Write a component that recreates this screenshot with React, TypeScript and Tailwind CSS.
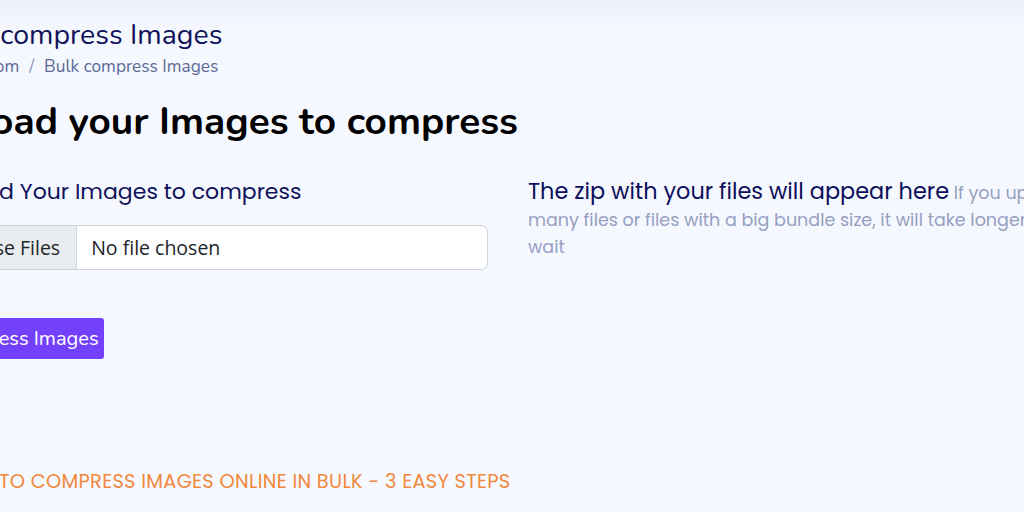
const nunito = "font-['Nunito','Lato','Open_Sans',sans-serif]";
const poppins = "font-['Poppins','Inter','Open_Sans',sans-serif]";

export default function App() {
  return (
    <div className="h-[512px] w-[1024px] overflow-hidden bg-[linear-gradient(to_bottom,#eceff8_0px,#f5f8ff_30px)]">
      <div className="-ml-[56px] w-[1180px]">
        {/* page title + breadcrumb */}
        <div className={`pt-[18px] ${nunito}`}>
          <h1 className="-ml-[9px] text-[28.5px] leading-[34px] text-[#10125a]">Bulk compress Images</h1>
          <div className="-ml-[23px] mt-[4px] flex items-center gap-[10px] text-[17.3px] leading-[22px] text-[#5b6a96]">
            <span>Tinyimg.com</span>
            <span className="text-[#8a94b3]">/</span>
            <span>Bulk compress Images</span>
          </div>
        </div>

        <h2 className={`-ml-[17px] mt-[20px] text-[38.8px] leading-[48px] font-bold text-black ${nunito}`}>
          Upload your Images to compress
        </h2>

        <div className="mt-[31px] flex gap-[40px]">
          {/* left column */}
          <div className="w-[544px]">
            <label className={`-ml-[9px] block text-[22px] leading-[30px] text-[#10125a] ${poppins}`}>
              Upload Your Images to compress
            </label>
            <div className="mt-[18px] flex h-[45px] overflow-hidden rounded-[7px] border border-[#ced4da] bg-white font-['Segoe_UI','Open_Sans',sans-serif] text-[19.5px] text-[#212529]">
              <div className="flex items-center border-r border-[#ced4da] bg-[#e9ecef] pl-[2px] pr-[16px]">
                Choose Files
              </div>
              <div className="flex items-center pl-[14px]">No file chosen</div>
            </div>
            <button className={`-ml-[21px] mt-[48px] h-[41px] rounded-[3px] bg-[#7341fb] pl-[16px] pr-[5px] text-[20px] text-white ${nunito}`}>
              Compress Images
            </button>
          </div>

          {/* right column */}
          <div className={`w-[570px] pt-[1px] ${poppins}`}>
            <p className="text-[17.5px] leading-[27px] text-[#95a0c0]">
              <span className="text-[22.4px] text-[#0d0f5c]">The zip with your files will appear here</span>{" "}
              If you upload many files or files with a big bundle size, it will take longer. Please wait
            </p>
          </div>
        </div>

        <div className={`ml-[1px] mt-[110px] text-[19.4px] leading-[26px] uppercase tracking-[0.3px] text-[#f0883e] ${poppins}`}>
          How to compress Images online in bulk - 3 easy steps
        </div>
      </div>
    </div>
  );
}
